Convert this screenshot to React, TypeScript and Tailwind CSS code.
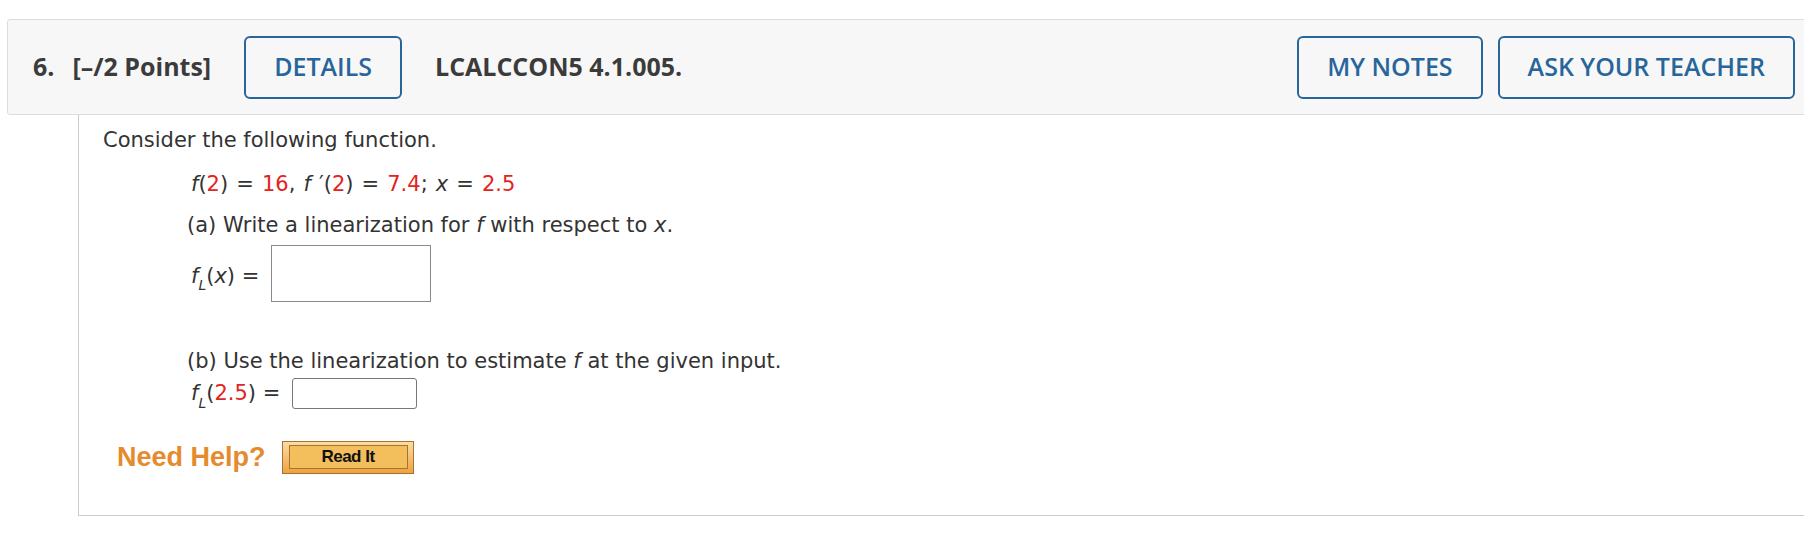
export default function App() {
  const red = "text-[#e3241c]";

  const sub = (
    <sub className="text-[14px] italic align-[-4px] leading-none">L</sub>
  );

  return (
    <div className="w-[1804px] h-[546px] overflow-hidden bg-white font-['Open_Sans',sans-serif]">
      <div className="pt-[19px] pl-[7px]">
        <div className="w-[1810px] h-[96px] flex items-center justify-between bg-[#f7f7f7] border border-[#dcdcdc] rounded-[3px] pl-[25px] pr-[21px]">
          <div className="flex items-center text-[25px] text-[#3b3b3b]">
            <span className="font-bold">6.</span>
            <span className="font-bold ml-[18px]">[–/2 Points]</span>
            <button className="ml-[33px] h-[63px] px-[28px] border-2 border-[#28659a] rounded-[6px] text-[#28659a] font-semibold">
              DETAILS
            </button>
            <span className="font-bold ml-[33px]">LCALCCON5 4.1.005.</span>
          </div>
          <div className="flex items-center gap-[15px] text-[25px]">
            <button className="h-[63px] px-[28px] border-2 border-[#28659a] rounded-[6px] text-[#28659a] font-semibold">
              MY NOTES
            </button>
            <button className="h-[63px] px-[28px] border-2 border-[#28659a] rounded-[6px] text-[#28659a] font-semibold">
              ASK YOUR TEACHER
            </button>
          </div>
        </div>
      </div>

      <div className="ml-[78px] w-[1800px] border-l border-b border-[#cccccc] pl-[24px] pt-[13px] pb-[41px] text-[21px] leading-[24px] text-[#333333] font-['DejaVu_Sans',sans-serif]">
        <p>Consider the following function.</p>

        <div className="pl-[84px]">
          <p className="mt-[20px] pl-[4px] [word-spacing:1.4px]">
            <i>f</i>(<span className={red}>2</span>) = <span className={red}>16</span>, <i>f</i> ′(
            <span className={red}>2</span>) = <span className={red}>7.4</span>; <i>x</i> ={" "}
            <span className={red}>2.5</span>
          </p>

          <p className="mt-[17px]">
            (a) Write a linearization for <i>f</i> with respect to <i>x</i>.
          </p>

          <div className="mt-[8px] flex items-center pl-[4px]">
            <span className="pt-[5px]">
              <i>f</i>
              {sub}(<i>x</i>) =
            </span>
            <div className="ml-[12px] w-[160px] h-[57px] border border-[#8a8a8a] bg-white"></div>
          </div>

          <p className="mt-[47px]">
            (b) Use the linearization to estimate <i>f</i> at the given input.
          </p>

          <div className="mt-[5px] flex items-center pl-[4px]">
            <span>
              <i>f</i>
              {sub}(<span className={red}>2.5</span>) =
            </span>
            <div className="ml-[12px] w-[125px] h-[31px] border border-[#777777] rounded-[3px] bg-white"></div>
          </div>
        </div>

        <div className="mt-[32px] pl-[14px] flex items-center">
          <span className="font-['Liberation_Sans',sans-serif] font-bold text-[27px] text-[#e58b2d] leading-none">
            Need Help?
          </span>
          <div className="ml-[16px] w-[132px] h-[33px] border border-[#a8732f] bg-gradient-to-b from-[#fbdca4] to-[#eea13e] pl-[6px] pr-[5px] pt-[3px] pb-[4px]">
            <div className="h-full border border-[#a5742f] bg-[#f3be5c] flex items-center justify-center font-['Liberation_Sans',sans-serif] font-bold text-[17px] text-[#111111] tracking-[-0.5px]">
              Read It
            </div>
          </div>
        </div>
      </div>
    </div>
  );
}
